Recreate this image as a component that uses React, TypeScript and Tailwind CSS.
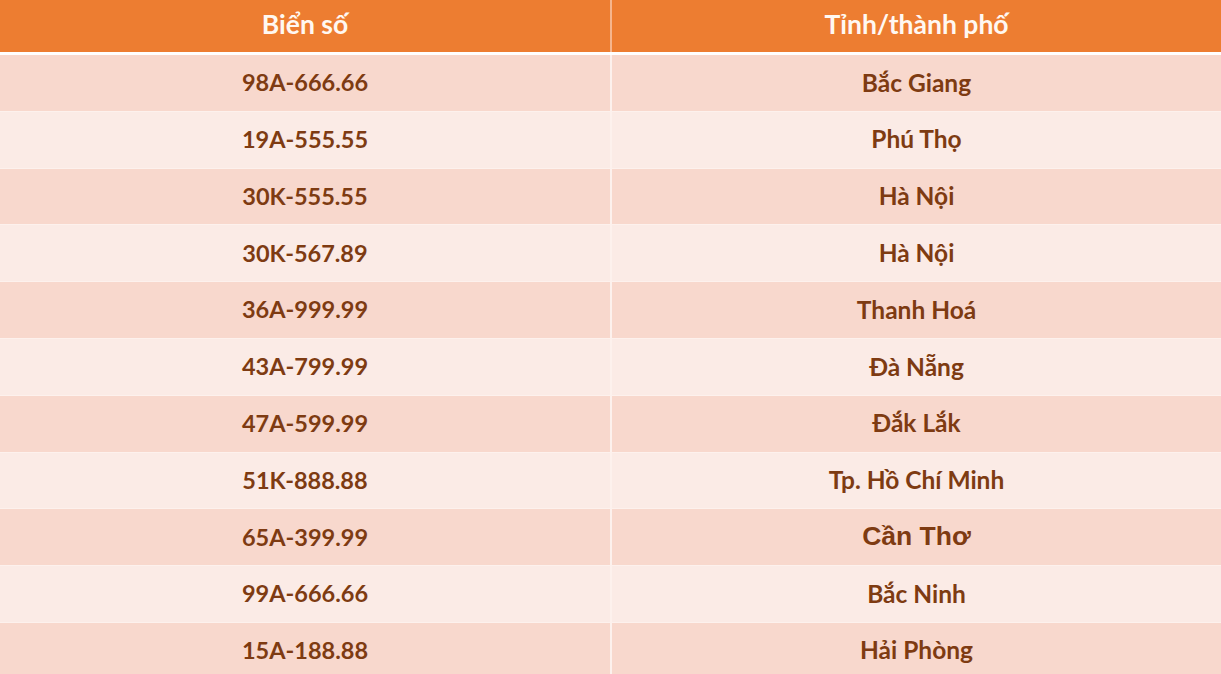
import React from "react";

const rows: [string, string][] = [
  ["98A-666.66", "Bắc Giang"],
  ["19A-555.55", "Phú Thọ"],
  ["30K-555.55", "Hà Nội"],
  ["30K-567.89", "Hà Nội"],
  ["36A-999.99", "Thanh Hoá"],
  ["43A-799.99", "Đà Nẵng"],
  ["47A-599.99", "Đắk Lắk"],
  ["51K-888.88", "Tp. Hồ Chí Minh"],
  ["65A-399.99", "Cần Thơ"],
  ["99A-666.66", "Bắc Ninh"],
  ["15A-188.88", "Hải Phòng"],
];

export default function App() {
  return (
    <div className="w-[1221px] h-[674px] overflow-hidden bg-white font-['Lato',sans-serif] font-bold">
      <div className="flex h-[52px] bg-[#ED7D31] text-[#fff8f2] text-[26.5px]">
        <div className="w-[612px] border-r-2 border-[#f6b58c] flex items-center justify-center pb-[2px]">Biển số</div>
        <div className="flex-1 flex items-center justify-center pb-[2px]">Tỉnh/thành phố</div>
      </div>
      <div className="h-[3px] bg-white" />
      {rows.map(([plate, city], i) => (
        <div
          key={i}
          className={`flex h-[56.8px] text-[#7E3B12] border-b border-[#fdf1ed] ${
            i % 2 === 0 ? "bg-[#F8D8CD]" : "bg-[#FBEBE6]"
          }`}
        >
          <div className="w-[612px] border-r-2 border-[#fdf1ed] flex items-center justify-center text-[23.5px]">{plate}</div>
          <div
            className={`flex-1 flex items-center justify-center ${
              city === "Cần Thơ" ? "font-['Liberation_Sans',sans-serif] text-[26.5px]" : "text-[24.5px]"
            }`}
          >
            {city}
          </div>
        </div>
      ))}
    </div>
  );
}
